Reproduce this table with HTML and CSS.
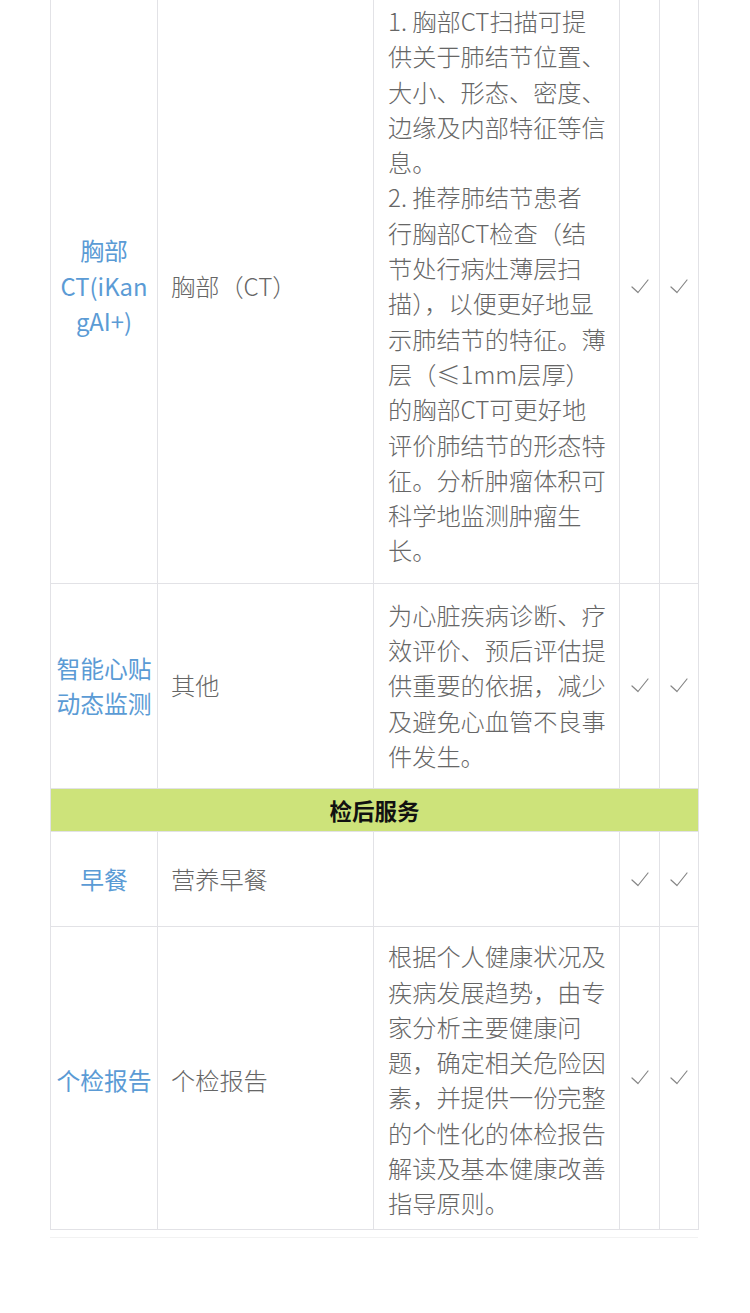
FILE: index.html
```html
<!DOCTYPE html>
<html lang="zh-CN">
<head>
<meta charset="utf-8">
<title>体检项目</title>
<link rel="stylesheet" href="styles.css">
</head>
<body>
<div class="page">
  <div class="wrap">
    <table class="items">
      <colgroup>
        <col class="c-name">
        <col class="c-cat">
        <col class="c-desc">
        <col class="c-chk">
        <col class="c-chk2">
      </colgroup>
      <tbody>
        <tr class="r-ct">
          <td class="name">胸部<br>CT(iKan<br>gAI+)</td>
          <td class="cat">胸部（CT）</td>
          <td class="desc">1. 胸部CT扫描可提<br>供关于肺结节位置、<br>大小、形态、密度、<br>边缘及内部特征等信<br>息。<br>2. 推荐肺结节患者<br>行胸部CT检查（结<br>节处行病灶薄层扫<br>描），以便更好地显<br>示肺结节的特征。薄<br>层（≤1mm层厚）<br>的胸部CT可更好地<br>评价肺结节的形态特<br>征。分析肿瘤体积可<br>科学地监测肿瘤生<br>长。</td>
          <td class="chk"><svg class="tick" viewBox="0 0 18 15" width="18" height="15"><polyline points="1,8 7,13.5 17,1"/></svg></td>
          <td class="chk"><svg class="tick" viewBox="0 0 18 15" width="18" height="15"><polyline points="1,8 7,13.5 17,1"/></svg></td>
        </tr>
        <tr>
          <td class="name">智能心贴<br>动态监测</td>
          <td class="cat">其他</td>
          <td class="desc">为心脏疾病诊断、疗<br>效评价、预后评估提<br>供重要的依据，减少<br>及避免心血管不良事<br>件发生。</td>
          <td class="chk"><svg class="tick" viewBox="0 0 18 15" width="18" height="15"><polyline points="1,8 7,13.5 17,1"/></svg></td>
          <td class="chk"><svg class="tick" viewBox="0 0 18 15" width="18" height="15"><polyline points="1,8 7,13.5 17,1"/></svg></td>
        </tr>
        <tr class="section">
          <td colspan="5">检后服务</td>
        </tr>
        <tr class="r-short">
          <td class="name">早餐</td>
          <td class="cat">营养早餐</td>
          <td class="desc"></td>
          <td class="chk"><svg class="tick" viewBox="0 0 18 15" width="18" height="15"><polyline points="1,8 7,13.5 17,1"/></svg></td>
          <td class="chk"><svg class="tick" viewBox="0 0 18 15" width="18" height="15"><polyline points="1,8 7,13.5 17,1"/></svg></td>
        </tr>
        <tr class="r-last">
          <td class="name">个检报告</td>
          <td class="cat">个检报告</td>
          <td class="desc">根据个人健康状况及<br>疾病发展趋势，由专<br>家分析主要健康问<br>题，确定相关危险因<br>素，并提供一份完整<br>的个性化的体检报告<br>解读及基本健康改善<br>指导原则。</td>
          <td class="chk"><svg class="tick" viewBox="0 0 18 15" width="18" height="15"><polyline points="1,8 7,13.5 17,1"/></svg></td>
          <td class="chk"><svg class="tick" viewBox="0 0 18 15" width="18" height="15"><polyline points="1,8 7,13.5 17,1"/></svg></td>
        </tr>
      </tbody>
    </table>
  </div>
</div>
</body>
</html>
```

FILE: styles.css
```css
html, body {
  margin: 0;
  padding: 0;
  background: #ffffff;
}

body {
  font-family: "Noto Sans CJK SC", "Noto Sans", sans-serif;
  color: #666666;
}

.page {
  padding: 0 52px 0 50px;
  height: 1313px;
  overflow: hidden;
}

.wrap {
  margin-top: -11px;
  padding-bottom: 7px;
  border-bottom: 1px solid #f2f2f2;
}

.items {
  width: 648px;
  border-collapse: collapse;
  table-layout: fixed;
}

.c-name { width: 107px; }
.c-cat { width: 216px; }
.c-desc { width: 246px; }
.c-chk { width: 40px; }
.c-chk2 { width: 39px; }

.items td {
  border: 1px solid #e2e2e6;
  vertical-align: middle;
  font-size: 24.2px;
  line-height: 35.3px;
  padding: 13px 0 15px;
  font-weight: 300;
}

.items td.name {
  color: #5b9bd5;
  font-weight: 400;
  font-size: 23.8px;
  text-align: center;
  padding-left: 0;
  padding-right: 0;
}

.items td.cat {
  padding-left: 13px;
  padding-right: 6px;
  white-space: nowrap;
}

.items td.desc {
  padding-left: 14px;
  padding-right: 4px;
  white-space: nowrap;
}

.items td.chk {
  text-align: center;
  padding: 0;
  line-height: 0;
}

.tick {
  display: inline-block;
  fill: none;
  stroke: #858585;
  stroke-width: 1.2;
  stroke-linecap: round;
  stroke-linejoin: round;
}

.r-short td {
  height: 66px;
}

.r-last td {
  padding-top: 11px;
  padding-bottom: 8px;
}

.section td {
  background: #cde37a;
  color: #111111;
  font-weight: 700;
  font-size: 22.5px;
  line-height: 28px;
  text-align: center;
  padding: 7px 0;
}
```
